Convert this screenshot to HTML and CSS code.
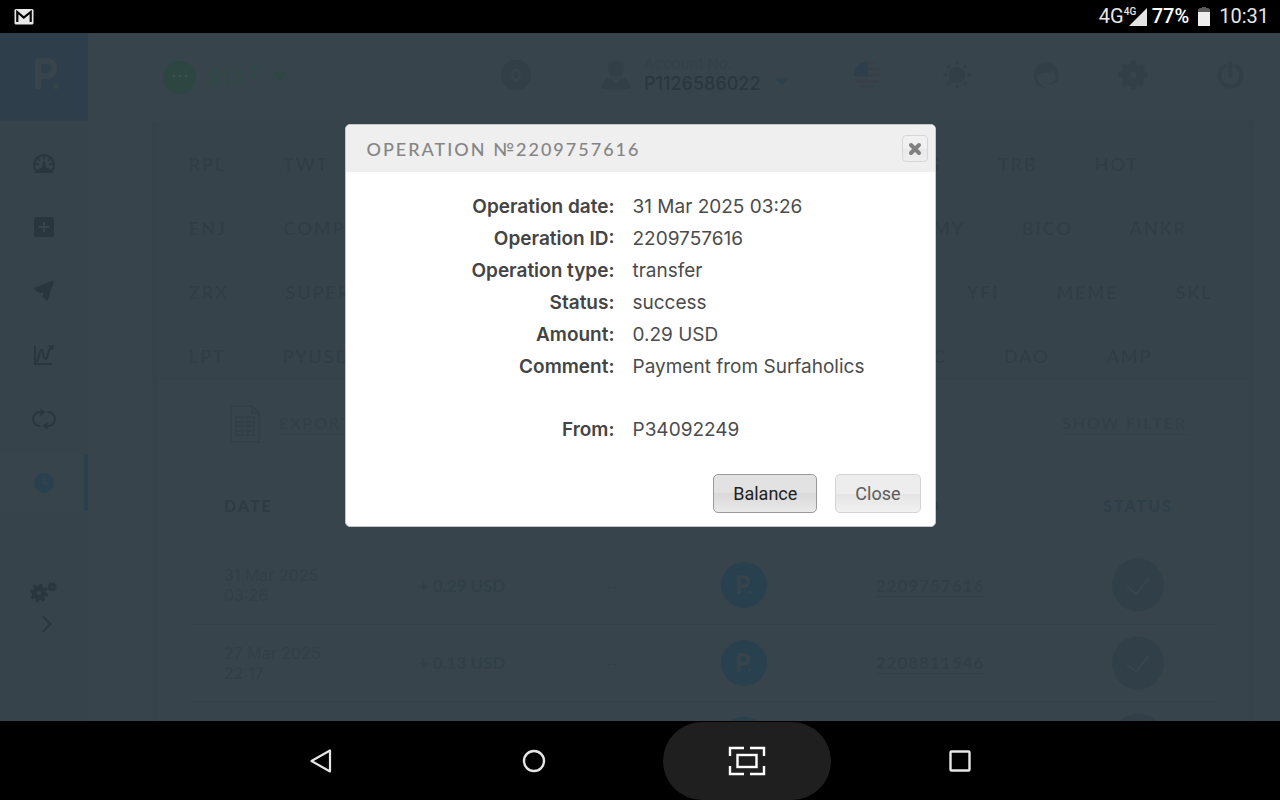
FILE: index.html
```html
<!DOCTYPE html>
<html lang="en">
<head>
<meta charset="utf-8">
<meta name="viewport" content="width=device-width, initial-scale=1">
<title>Operation №2209757616</title>
<link rel="stylesheet" href="styles.css">
</head>
<body>
<div class="status-bar">
  <svg width="20" height="17" viewBox="0 0 20 17" aria-hidden="true"><rect x="0.500" y="1" width="19" height="15.500" rx="1.500" fill="#e8e8e8"/><path d="M3.300 14V4l6.500 5.500L16.700 4v10" fill="none" stroke="#000" stroke-width="2.200"/></svg>
  <div class="status-right">
    <span class="network">4G</span>
    <span class="signal">
      <svg width="18" height="18" viewBox="0 0 18 18" aria-hidden="true"><path d="M0 18L18 0v18z" fill="#e4e4e4"/></svg>
      <span class="signal-tag">4G</span>
    </span>
    <span class="percent">77%</span>
    <svg class="battery" width="12" height="19" viewBox="0 0 12 19" aria-hidden="true"><path d="M2 1h2V0h4v1h2l2 1v4H0V2z" fill="#5a5a5a"/><path d="M0 5h12v14H0z" fill="#ededed"/></svg>
    <span class="clock">10:31</span>
  </div>
</div>

<div class="app">
  <nav class="sidebar" aria-label="Main">
    <a class="logo" href="#" aria-label="Home">
      <svg width="28" height="34" viewBox="0 0 28 34" aria-hidden="true"><path d="M5 32V4h9a7.500 7.500 0 0 1 0 15H6" fill="none" stroke="#37444c" stroke-width="6" stroke-linejoin="round"/><circle cx="23" cy="29" r="3" fill="#37444c"/></svg>
    </a>
    <div class="side-links">
      <a class="side-link" href="#" aria-label="Dashboard"><svg width="24" height="22" viewBox="0 0 24 22"><path d="M4.500 19.500A10 10 0 1 1 19.500 19.500z" fill="none" stroke="currentColor" stroke-width="2"/><path d="M4 20q4-4 6.500-3.500L12 9l1.500 7.500Q17 16 20 20zM3 12h4M17 12h4M12 3v4M5.500 6l2.500 2.500M18.500 6L16 8.500" fill="currentColor" stroke="currentColor" stroke-width="1.500"/></svg></a>
      <a class="side-link" href="#" aria-label="Deposit"><svg width="22" height="22" viewBox="0 0 22 22"><rect x="1" y="1" width="20" height="20" rx="1.500" fill="currentColor"/><path d="M11 6v10M6 11h10" stroke="#37444c" stroke-width="2"/></svg></a>
      <a class="side-link" href="#" aria-label="Send"><svg width="22" height="22" viewBox="0 0 22 22"><path d="M1 8.500L20.500 1 14 20.500l-4-4 1-5-5 1z" fill="currentColor" stroke="currentColor" stroke-linejoin="round"/></svg></a>
      <a class="side-link" href="#" aria-label="Exchange"><svg width="22" height="22" viewBox="0 0 22 22"><path d="M2 2v18h17M4 18C7 11 6 6 8.500 6s1 9 4 9 1-7 5.500-11" fill="none" stroke="currentColor" stroke-width="2"/><path d="M15 2l6-1-1 5z" fill="currentColor"/></svg></a>
      <a class="side-link" href="#" aria-label="Convert"><svg width="24" height="22" viewBox="0 0 24 22"><path d="M8.500 18H8A7 7 0 0 1 8 4h2M15.500 4H16a7 7 0 0 1 0 14h-2" fill="none" stroke="currentColor" stroke-width="2"/><path d="M8.500 0.500l5 3.500-5 4zM15.500 14l-5 4 5 3.500z" fill="currentColor"/></svg></a>
      <a class="side-link side-link-active" href="#" aria-label="History" aria-current="page"><svg width="22" height="22" viewBox="0 0 22 22"><circle cx="11" cy="11" r="10" fill="currentColor"/><path d="M10.500 5.500v6H15" fill="none" stroke="#37444c" stroke-width="1.500"/></svg></a>
    </div>
    <a class="side-tools" href="#" aria-label="Settings"><svg width="28" height="22" viewBox="0 0 28 22"><circle cx="9" cy="12" r="4.500" fill="none" stroke="currentColor" stroke-width="5"/><circle cx="9" cy="12" r="8" fill="none" stroke="currentColor" stroke-width="2.500" stroke-dasharray="3.200 3.083"/><circle cx="22" cy="6" r="2.500" fill="none" stroke="currentColor" stroke-width="2.500"/><circle cx="22" cy="6" r="4" fill="none" stroke="currentColor" stroke-width="1.500" stroke-dasharray="1.600 1.542"/></svg></a>
    <button class="side-expand" type="button" aria-label="Expand menu"><svg width="12" height="18" viewBox="0 0 12 18"><path d="M2 1.500L9.500 9 2 16.500" fill="none" stroke="currentColor" stroke-width="2"/></svg></button>
  </nav>

  <div class="page">
    <header class="topbar">
      <button class="balance" type="button">
        <svg width="33" height="33" viewBox="0 0 33 33" aria-hidden="true"><circle cx="16.500" cy="16.500" r="16.500" fill="#2d4642"/><g fill="#3b504e"><circle cx="11" cy="15" r="1.500"/><circle cx="17" cy="15" r="1.500"/><circle cx="23" cy="15" r="1.500"/></g></svg>
        <span class="balance-sum">$13<sup>.21</sup></span>
        <svg width="14" height="10" viewBox="0 0 14 10" aria-hidden="true"><path d="M1 1h12L7 9z" fill="#2d4840" stroke="#2d4840" stroke-linejoin="round"/></svg>
      </button>
      <span class="counter">0</span>
      <button class="account" type="button">
        <svg width="28" height="28" viewBox="0 0 28 28" aria-hidden="true"><ellipse cx="14" cy="8" rx="8" ry="8" fill="#323f47"/><path d="M0 28c0-7 3-11 9-11l5 5 5-5c6 0 9 4 9 11z" fill="#323f47"/></svg>
        <span class="account-text"><span class="account-label">Account No.</span><strong class="account-number">P1126586022</strong></span>
        <svg class="account-caret" width="14" height="9" viewBox="0 0 14 9" aria-hidden="true"><path d="M0 1h14L7 8z" fill="#2e404c"/></svg>
      </button>
      <button class="top-icon" type="button" aria-label="Language"><svg width="27" height="28" viewBox="0 0 27 28"><defs><clipPath id="flag"><ellipse cx="13.500" cy="14" rx="13" ry="13.500"/></clipPath></defs><g clip-path="url(#flag)"><path d="M0 2h27M0 8h27M0 14h27M0 20h27M0 26h27" stroke="#383f48" stroke-width="3"/><path d="M0 0h14v15H0z" fill="#2e3f4b"/></g></svg></button>
      <button class="top-icon" type="button" aria-label="Light theme"><svg width="28" height="28" viewBox="0 0 28 28"><circle cx="14" cy="14" r="8" fill="currentColor"/><g fill="currentColor"><circle cx="14" cy="2" r="1.800"/><circle cx="14" cy="26" r="1.800"/><circle cx="2" cy="14" r="1.800"/><circle cx="26" cy="14" r="1.800"/><circle cx="5.500" cy="5.500" r="1.800"/><circle cx="22.500" cy="5.500" r="1.800"/><circle cx="5.500" cy="22.500" r="1.800"/><circle cx="22.500" cy="22.500" r="1.800"/></g></svg></button>
      <button class="top-icon" type="button" aria-label="Support"><svg width="28" height="28" viewBox="0 0 28 28"><path d="M14 27C6 26 2 21 2 14S7 1.500 14 1.500 26 7 26 13c2 2 1 6-2 8q-4 3-9 2 5 0 8-3c2-4 1-7-2-11-5 5-11 1-16 6-1 5 3 9 9 12z" fill="currentColor"/></svg></button>
      <button class="top-icon" type="button" aria-label="Preferences"><svg width="30" height="30" viewBox="0 0 30 30"><circle cx="15" cy="15" r="7.500" fill="none" stroke="currentColor" stroke-width="8"/><circle cx="15" cy="15" r="12.500" fill="none" stroke="currentColor" stroke-width="4" stroke-dasharray="4.800 5.017" stroke-dashoffset="2.400"/></svg></button>
      <button class="top-icon" type="button" aria-label="Log out"><svg width="27" height="28" viewBox="0 0 27 28"><path d="M8 5a11 11 0 1 0 11 0M13.500 2v12" fill="none" stroke="currentColor" stroke-width="4" stroke-linecap="round"/></svg></button>
    </header>

    <main class="content">
      <section class="coins" aria-label="Coins">
        <div class="coin-row"><span>RPL</span><span>TWT</span><div class="coin-tail"><span>G</span><span>TRB</span><span>HOT</span></div></div>
        <div class="coin-row"><span>ENJ</span><span>COMP</span><div class="coin-tail coin-tail-mid"><span>MY</span><span>BICO</span><span>ANKR</span></div></div>
        <div class="coin-row"><span>ZRX</span><span>SUPER</span><div class="coin-tail coin-tail-short"><span>YFI</span><span>MEME</span><span>SKL</span></div></div>
        <div class="coin-row"><span>LPT</span><span>PYUSD</span><div class="coin-tail coin-tail-mid"><span>C</span><span>DAO</span><span>AMP</span></div></div>
      </section>

      <section class="history" aria-label="Operations">
        <div class="tools">
          <a class="export" href="#">
            <svg width="30" height="38" viewBox="0 0 30 38" aria-hidden="true"><path d="M1 1h21l7 7v29H1zM22 1v7h7M6 12h18v18H6zM6 17h18M6 21h18M6 26h18M12 12v18M18 12v18" fill="none" stroke="currentColor" stroke-width="1.500"/></svg>
            <span class="dotted">EXPORT</span>
          </a>
          <a class="dotted" href="#">SHOW FILTER</a>
        </div>
        <table class="operations">
          <thead><tr><th class="col-date">DATE</th><th class="col-amount"></th><th class="col-fee"></th><th class="col-system"></th><th class="col-id">ID</th><th class="col-status">STATUS</th></tr></thead>
          <tbody>
            <tr>
              <td class="date">31 Mar 2025<br>03:26</td><td class="amount">+ 0.29 USD</td><td>--</td>
              <td><svg width="46" height="46" viewBox="0 0 46 46" role="img" aria-label="Payeer"><circle cx="23" cy="23" r="23" fill="#29414f"/><path d="M18 32V15h5a4.500 4.500 0 0 1 0 9h-5" fill="none" stroke="#37444c" stroke-width="3.500"/><circle cx="29" cy="30" r="1.500" fill="#2f4653"/></svg></td>
              <td><a class="op-id" href="#">2209757616</a></td>
              <td><svg width="52" height="54" viewBox="0 0 52 54" role="img" aria-label="Success"><ellipse cx="26" cy="27" rx="26" ry="26.500" fill="#314048"/><path d="M15 28l9 8 13-16" fill="none" stroke="#37444c" stroke-width="2"/></svg></td>
            </tr>
            <tr>
              <td class="date">27 Mar 2025<br>22:17</td><td class="amount">+ 0.13 USD</td><td>--</td>
              <td><svg width="46" height="46" viewBox="0 0 46 46" role="img" aria-label="Payeer"><circle cx="23" cy="23" r="23" fill="#29414f"/><path d="M18 32V15h5a4.500 4.500 0 0 1 0 9h-5" fill="none" stroke="#37444c" stroke-width="3.500"/><circle cx="29" cy="30" r="1.500" fill="#2f4653"/></svg></td>
              <td><a class="op-id" href="#">2208811546</a></td>
              <td><svg width="52" height="54" viewBox="0 0 52 54" role="img" aria-label="Success"><ellipse cx="26" cy="27" rx="26" ry="26.500" fill="#314048"/><path d="M15 28l9 8 13-16" fill="none" stroke="#37444c" stroke-width="2"/></svg></td>
            </tr>
            <tr>
              <td></td><td></td><td></td>
              <td><svg width="46" height="46" viewBox="0 0 46 46" aria-hidden="true"><circle cx="23" cy="23" r="23" fill="#29414f"/></svg></td>
              <td></td>
              <td><svg width="52" height="54" viewBox="0 0 52 54" aria-hidden="true"><ellipse cx="26" cy="27" rx="26" ry="26.500" fill="#314048"/></svg></td>
            </tr>
          </tbody>
        </table>
      </section>
    </main>
  </div>

  <div class="overlay">
    <div class="dialog" role="dialog" aria-labelledby="dialog-title">
      <div class="dialog-head">
        <h1 class="dialog-title" id="dialog-title">OPERATION №2209757616</h1>
        <button class="dialog-x" type="button" aria-label="Close dialog"><svg width="14" height="14" viewBox="0 0 14 14"><path d="M3 3l8 8M11 3l-8 8" stroke="#808080" stroke-width="4" stroke-linecap="round"/></svg></button>
      </div>
      <dl class="details">
        <dt>Operation date:</dt><dd>31 Mar 2025 03:26</dd>
        <dt>Operation ID:</dt><dd>2209757616</dd>
        <dt>Operation type:</dt><dd>transfer</dd>
        <dt>Status:</dt><dd>success</dd>
        <dt>Amount:</dt><dd>0.29 USD</dd>
        <dt>Comment:</dt><dd>Payment from Surfaholics</dd>
        <dt class="apart">From:</dt><dd class="apart">P34092249</dd>
      </dl>
      <div class="dialog-actions">
        <button class="btn btn-focus" type="button">Balance</button>
        <button class="btn" type="button">Close</button>
      </div>
    </div>
  </div>
</div>

<nav class="nav-bar" aria-label="System">
  <button class="nav-key" type="button" aria-label="Back"><svg width="24" height="26" viewBox="0 0 24 26"><path d="M21 2.500v21L2.500 13z" fill="none" stroke="#e6e6e6" stroke-width="2.200" stroke-linejoin="round"/></svg></button>
  <button class="nav-key" type="button" aria-label="Home"><svg width="24" height="24" viewBox="0 0 24 24"><circle cx="12" cy="12" r="10" fill="none" stroke="#e6e6e6" stroke-width="2.400"/></svg></button>
  <button class="nav-key nav-key-pressed" type="button" aria-label="Screenshot"><svg width="38" height="30" viewBox="0 0 38 30"><g fill="none" stroke="#fff" stroke-width="2.400"><path d="M2 10V2h14M22 2h14v8M36 20v8H22M16 28H2v-8"/><rect x="9.500" y="9" width="19" height="12"/></g></svg></button>
  <button class="nav-key" type="button" aria-label="Recent apps"><svg width="22" height="22" viewBox="0 0 22 22"><rect x="1.500" y="1.500" width="19" height="19" rx="1" fill="none" stroke="#e6e6e6" stroke-width="2.400"/></svg></button>
</nav>
</body>
</html>
```
FILE: styles.css
```css
* {
  box-sizing: border-box;
}

body {
  margin: 0;
  height: 100vh;
  display: flex;
  flex-direction: column;
  overflow: hidden;
  background: #000;
  font-family: Inter, "Liberation Sans", sans-serif;
  color: #303d45;
}

a {
  color: inherit;
  text-decoration: none;
}

button {
  border: 0;
  padding: 0;
  background: none;
  color: inherit;
  font: inherit;
  text-align: left;
}

svg {
  display: block;
}

.status-bar {
  display: flex;
  align-items: center;
  justify-content: space-between;
  height: 33px;
  padding: 0 11px 0 14px;
  color: #e6e6e6;
  font: 20px/33px Roboto, sans-serif;
}

.status-right {
  display: flex;
  align-items: center;
}

.signal {
  position: relative;
  margin-left: 5px;
}

.signal-tag {
  position: absolute;
  top: -1px;
  left: -5px;
  font-size: 10px;
  line-height: 10px;
  font-weight: 500;
}

.percent {
  margin-left: 5px;
  color: #fff;
  font-weight: 500;
}

.battery {
  margin: 0 9px;
}

.app {
  position: relative;
  flex: 1;
  min-height: 0;
  display: flex;
  overflow: hidden;
  background: #37444c;
}

.sidebar {
  flex: 0 0 88px;
  display: flex;
  flex-direction: column;
  background: #36434b;
  color: #2a363e;
}

.logo {
  display: flex;
  align-items: center;
  height: 88px;
  padding-left: 33px;
  padding-bottom: 6px;
  background: #2e3f4b;
}

.side-links {
  display: flex;
  flex-direction: column;
  gap: 7px;
  padding-top: 13px;
}

.side-link {
  display: flex;
  align-items: center;
  justify-content: center;
  height: 57px;
  padding-left: 3px;
  border-right: 4px solid transparent;
}

.side-link-active {
  background: #37444c;
  border-color: #2b404e;
  color: #2b404e;
}

.side-tools {
  align-self: flex-start;
  margin: 70px 0 0 30px;
}

.side-expand {
  align-self: flex-start;
  margin: 12px 0 0 41px;
}

.page {
  flex: 1;
  min-width: 0;
}

.topbar {
  display: grid;
  grid-template-columns: 338fr 101fr 252fr 89fr 89fr 86fr 99fr 63fr;
  align-items: center;
  height: 88px;
  padding-left: 75px;
  padding-bottom: 4px;
  color: #323f47;
}

.balance {
  display: flex;
  align-items: center;
  gap: 11px;
  padding-top: 4px;
  color: #2f4943;
  font-size: 22px;
  line-height: 30px;
}

.balance-sum sup {
  font-size: 14px;
  line-height: 14px;
}

.counter {
  display: flex;
  align-items: center;
  justify-content: center;
  width: 30px;
  height: 30px;
  border-radius: 50%;
  background: #323f47;
  color: #37444c;
  font-size: 16px;
  font-weight: 700;
}

.account {
  display: flex;
  align-items: center;
  gap: 14px;
}

.account-text {
  display: flex;
  flex-direction: column;
}

.account-label {
  color: #344149;
  font-size: 15px;
  line-height: 18px;
}

.account-number {
  color: #2a373f;
  font-size: 18px;
  line-height: 22px;
  font-weight: 500;
}

.account-caret {
  margin-top: 13px;
}

.content {
  margin: 0 26px 0 64px;
  border: solid #35424a;
  border-width: 0 5px;
}

.coins {
  height: 259px;
  padding: 11px 0 0 32px;
  border-bottom: 1px solid #35424a;
  background: #36434b;
  color: #303d45;
  font: 18px/64px Lato, sans-serif;
  letter-spacing: 2px;
}

.coin-row {
  display: flex;
  gap: 57px;
}

.coin-tail {
  display: flex;
  gap: 57px;
  width: 323px;
  margin-left: auto;
}

.coin-tail-mid {
  width: 316px;
}

.coin-tail-short {
  width: 282px;
}

.history {
  padding: 0 33px 0 35px;
  background: #37444c;
  color: #323f47;
  font-family: Lato, sans-serif;
}

.tools {
  display: flex;
  align-items: center;
  justify-content: space-between;
  height: 81px;
  padding: 6px 29px 0 38px;
  font-size: 16px;
  letter-spacing: 2px;
}

.export {
  display: flex;
  align-items: center;
  gap: 19px;
}

.dotted {
  border-bottom: 1px dotted #313e46;
  line-height: 22px;
}

.operations {
  width: 100%;
  table-layout: fixed;
  border-collapse: collapse;
  text-align: center;
}

.operations th {
  height: 86px;
  padding: 2px 0 0;
  color: #2d3c44;
  font-size: 16px;
  font-weight: 900;
  letter-spacing: 2px;
}

.operations .col-date {
  width: 196px;
  padding-left: 32px;
  text-align: left;
}

.col-amount {
  width: 148px;
}

.col-fee {
  width: 152px;
}

.col-system {
  width: 112px;
}

.col-id {
  width: 260px;
}

.operations .col-status {
  width: 156px;
  color: #2e3f4a;
}

.operations td {
  height: 77px;
  padding: 0;
  border-bottom: 1px solid #344149;
}

.operations td svg {
  margin: 0 auto;
}

.operations .date {
  padding-left: 32px;
  color: #333f47;
  font: 16px/20px Inter, sans-serif;
  text-align: left;
}

.amount {
  color: #2f4046;
  font-size: 17px;
  font-weight: 700;
}

.op-id {
  border-bottom: 1px dotted #303d45;
  font-size: 17px;
  letter-spacing: 1px;
  font-weight: 700;
}

.overlay {
  position: absolute;
  inset: 0;
  display: flex;
  align-items: flex-start;
  justify-content: center;
  padding-top: 91px;
}

.dialog {
  width: 591px;
  max-width: 100%;
  border: 1px solid #c4c6c8;
  border-radius: 5px;
  overflow: hidden;
  background: #fff;
  color: #4b4b4b;
}

.dialog-head {
  display: flex;
  align-items: center;
  justify-content: space-between;
  height: 47px;
  padding: 0 7px 0 21px;
  background: #efefef;
}

.dialog-title {
  margin: 0;
  color: #858585;
  font: 500 18px/24px Lato, sans-serif;
  letter-spacing: 2px;
}

.dialog-x {
  display: flex;
  align-items: center;
  justify-content: center;
  width: 26px;
  height: 27px;
  border: 1px solid #d6d6d6;
  border-radius: 4px;
  background: linear-gradient(#f0f0f0 50%, #e8e8e8 50%, #efefef);
}

.details {
  display: grid;
  grid-template-columns: 269fr 302fr;
  column-gap: 18px;
  margin: 19px 0 0;
  font-size: 19px;
  line-height: 32px;
}

.details dt {
  color: #444;
  font-weight: 600;
  text-align: right;
}

.details dd {
  margin: 0;
}

.details .apart {
  margin-top: 31px;
}

.dialog-actions {
  display: flex;
  justify-content: flex-end;
  gap: 18px;
  padding: 28px 14px 13px;
}

.btn {
  height: 39px;
  padding: 0 19px;
  border: 1px solid #d3d3d3;
  border-radius: 5px;
  background: linear-gradient(#ededed 50%, #e4e4e4 50%, #f1f1f1);
  color: #5c5c5c;
  font: 18px/36px Roboto, sans-serif;
}

.btn-focus {
  border-color: #999;
  background: linear-gradient(#e2e2e2 50%, #d9d9d9 50%, #e9e9e9);
  color: #212121;
}

.nav-bar {
  display: flex;
  justify-content: center;
  gap: 45px;
  height: 79px;
  padding-top: 1px;
}

.nav-key {
  display: flex;
  align-items: center;
  justify-content: center;
  width: 168px;
  border-radius: 40px;
}

.nav-key-pressed {
  background: #1f1f1f;
}
```
